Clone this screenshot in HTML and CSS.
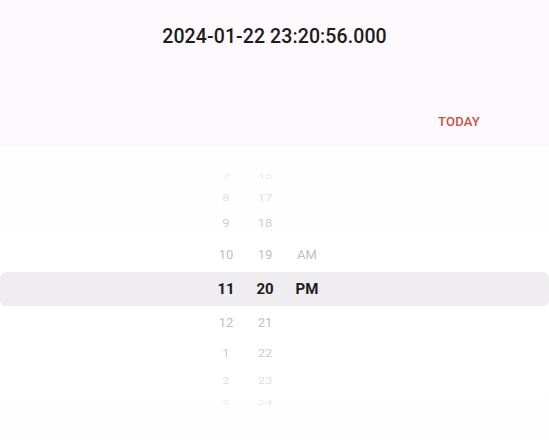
FILE: index.html
```html
<!DOCTYPE html>
<html>
<head>
<meta charset="utf-8">
<link rel="stylesheet" href="styles.css">
</head>
<body>
<div class="header">
  <div class="title">2024-01-22 23:20:56.000</div>
  <div class="actions"><span class="today">TODAY</span></div>
</div>
<div class="wheel">
  <div class="band"></div>
  <div class="row r4"><span class="c h">6</span><span class="c m">15</span><span class="c a"></span></div>
  <div class="row r3"><span class="c h">7</span><span class="c m">16</span><span class="c a"></span></div>
  <div class="row r2"><span class="c h">8</span><span class="c m">17</span><span class="c a"></span></div>
  <div class="row r1"><span class="c h">9</span><span class="c m">18</span><span class="c a"></span></div>
  <div class="row r0"><span class="c h">10</span><span class="c m">19</span><span class="c a">AM</span></div>
  <div class="row sel"><span class="c h">11</span><span class="c m">20</span><span class="c a">PM</span></div>
  <div class="row r0 below"><span class="c h">12</span><span class="c m">21</span><span class="c a"></span></div>
  <div class="row r1 below"><span class="c h">1</span><span class="c m">22</span><span class="c a"></span></div>
  <div class="row r2 below"><span class="c h">2</span><span class="c m">23</span><span class="c a"></span></div>
  <div class="row r3 below"><span class="c h">3</span><span class="c m">24</span><span class="c a"></span></div>
</div>
</body>
</html>
```
FILE: styles.css
```css
html, body {
  margin: 0;
  padding: 0;
  background: #ffffff;
  font-family: Roboto, "Noto Sans", sans-serif;
}
body {
  width: 549px;
  height: 440px;
  overflow: hidden;
}
.header {
  background: #fef9fd;
  height: 146px;
  display: flex;
  flex-direction: column;
}
.title {
  text-align: center;
  font-size: 19.5px;
  font-weight: 500;
  color: #1d1b20;
  padding-top: 25px;
  height: 24px;
  letter-spacing: 0.1px;
}
.actions {
  display: flex;
  justify-content: flex-end;
  padding-right: 69px;
  padding-top: 65px;
}
.today {
  font-size: 13px;
  font-weight: 500;
  color: #c9533f;
  letter-spacing: 0.2px;
}
.wheel {
  position: relative;
  height: 294px;
  overflow: hidden;
  display: flex;
  flex-direction: column;
  background: linear-gradient(#fefdfe, #ffffff 40%, #ffffff 80%, #fefdfe);
}
.band {
  position: absolute;
  left: 0;
  right: 0;
  top: 126px;
  height: 34px;
  background: #efedef;
  border-radius: 6px;
}
.row {
  position: relative;
  display: flex;
  justify-content: center;
  align-items: center;
  padding-right: 14px;
  flex: none;
  font-size: 13px;
  color: #bdbcbe;
}
.c {
  display: block;
  text-align: center;
}
.h { width: 36px; }
.m { width: 36px; margin-left: 3px; }
.a { width: 40px; margin-left: 4px; }
.row.r4 { height: 20px; color: #fefefe; }
.row.r4 .c { transform: scaleY(0.35); }
.row.r3 { height: 20px; color: #ececec; }
.row.r3 .c { transform: scaleY(0.55); }
.row.r2 { height: 23px; color: #e0e0e0; }
.row.r2 .c { transform: scaleY(0.72); }
.row.r1 { height: 29px; color: #cdcdcd; }
.row.r1 .c { transform: scaleY(0.88); }
.row.r0 { height: 33px; color: #c0bfc1; }
.row.sel {
  height: 35px;
  font-size: 15px;
  font-weight: 700;
  color: #1d1b20;
}
.row.r0.below { height: 32px; }
.row.r1.below { height: 30px; }
.row.r2.below { height: 24px; }
```
